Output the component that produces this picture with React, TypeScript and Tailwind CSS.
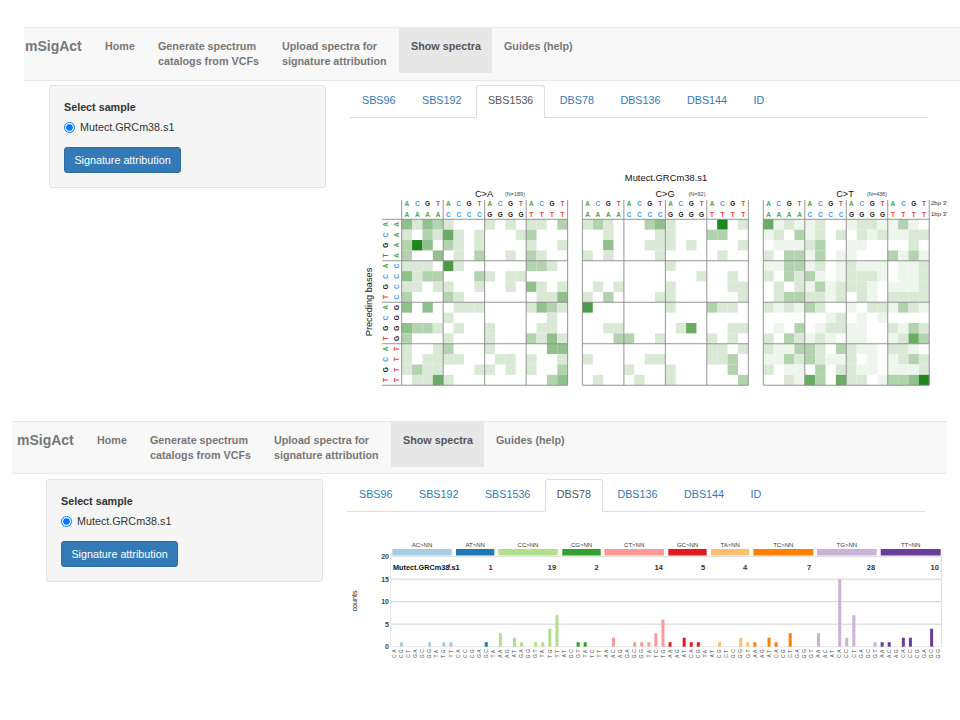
import React from "react";

const FONT = "font-['Liberation_Sans',Arial,sans-serif]";

const navItems = [
  { label: ["Home"], w: "w-[53px]" },
  { label: ["Generate spectrum", "catalogs from VCFs"], w: "w-[124px]" },
  { label: ["Upload spectra for", "signature attribution"], w: "w-[129px]" },
  { label: ["Show spectra"], w: "w-[93px]", active: true },
  { label: ["Guides (help)"], w: "w-[93px]" },
];

const tabs = ["SBS96", "SBS192", "SBS1536", "DBS78", "DBS136", "DBS144", "ID"];

function Navbar({ className, brandClass }: { className: string; brandClass: string }) {
  return (
    <div className={`flex items-start border-y border-[#e7e7e7] bg-[#f8f8f8] ${className}`}>
      <div className={`pt-[9px] text-[14px] leading-[18px] font-bold text-[#777] ${brandClass}`}>mSigAct</div>
      {navItems.map((item) => (
        <div
          key={item.label[0]}
          className={`h-[45px] whitespace-nowrap pt-[11px] pl-[12px] text-[10.75px] leading-[15px] font-bold ${item.w} ${
            item.active ? "bg-[#e7e7e7] text-[#555]" : "text-[#777]"
          }`}
        >
          {item.label.map((l) => (
            <div key={l}>{l}</div>
          ))}
        </div>
      ))}
    </div>
  );
}

function SampleWell({ className }: { className: string }) {
  return (
    <div className={`h-[103px] w-[277px] shrink-0 rounded-[3px] border border-[#e3e3e3] bg-[#f5f5f5] pt-[14px] pl-[14px] ${className}`}>
      <div className="text-[10.75px] leading-[14px] font-bold text-[#333]">Select sample</div>
      <label className="mt-[6px] flex h-[14px] items-center text-[10.75px] text-[#333]">
        <input type="radio" checked readOnly className="m-0 h-[11px] w-[11px] accent-[#0075ff]" />
        <span className="ml-[5px]">Mutect.GRCm38.s1</span>
      </label>
      <div className="mt-[13px] flex h-[26px] w-[117px] items-center justify-center rounded-[3px] border border-[#2e6da4] bg-[#337ab7] text-[10.75px] text-white">
        Signature attribution
      </div>
    </div>
  );
}

function Tabs({ active }: { active: string }) {
  return (
    <div className="flex h-[33px] w-[578px] items-start border-b border-[#ddd]">
      {tabs.map((t) => (
        <div
          key={t}
          className={`mr-[2.5px] flex h-[33px] items-center rounded-t-[3px] border px-[11px] pb-[2px] text-[10.75px] ${
            t === active ? "border-[#ddd] border-b-white bg-white text-[#555]" : "border-transparent text-[#337ab7]"
          }`}
        >
          {t}
        </div>
      ))}
    </div>
  );
}

const GREENS = ["#ffffff", "#eef5ec", "#d9e9d6", "#b3d3af", "#90c08c", "#6aab66", "#4a9a47", "#1f851d"];
const BASES = "ACGT";
const BASE_COLOR: Record<string, string> = { A: "#4aa648", C: "#3f9bf5", G: "#222222", T: "#f53b3b" };

const heatCA = [
  "4243200020202203",
  "2032520200023000",
  "3740320200002002",
  "3004020300203200",
  "2220620000003320",
  "4233000320220000",
  "2202200200204202",
  "3000320000000224",
  "4040022200002432",
  "0000200000000020",
  "4332020020000220",
  "3000200020003242",
  "2002300020000044",
  "2022220002202002",
  "2322000220202003",
  "0225200000000034",
];
const heatCG = [
  "2320003420000702",
  "0020000220003300",
  "0040002220200002",
  "2020000200000200",
  "0000000020000000",
  "0000000000020020",
  "0202000020000022",
  "2030000220000002",
  "6000000020003220",
  "0000000000000000",
  "0022000002500022",
  "0003300200002020",
  "0000000000002202",
  "2000002200002230",
  "0000200020000030",
  "0200020020000003",
];
const heatCT = [
  "5121120012211310",
  "1203120202121122",
  "0111230011000020",
  "2033130110003131",
  "1133120121110112",
  "2032310122210112",
  "0202131222101112",
  "0233221202102222",
  "2121320010221321",
  "0000001201010000",
  "0103012211002132",
  "2032121011001253",
  "2113320321102210",
  "1132321120101232",
  "2011030221101112",
  "0021530522013347",
];

const CELL = 10.37;
const HEAT_TOP = 219.3;

function HeatPanel({ x0, data, first }: { x0: number; data: string[]; first?: boolean }) {
  const bottom = HEAT_TOP + CELL * 16;
  return (
    <g>
      {data.map((row, r) =>
        row.split("").map((v, c) =>
          v === "0" ? null : (
            <rect key={`${r}-${c}`} x={x0 + c * CELL} y={HEAT_TOP + r * CELL} width={CELL} height={CELL} fill={GREENS[Number(v)]} />
          ),
        ),
      )}
      {[0, 4, 8, 12, 16].map((i) => (
        <g key={i}>
          <line x1={first ? 382 : x0} x2={x0 + 16 * CELL} y1={HEAT_TOP + i * CELL} y2={HEAT_TOP + i * CELL} stroke="#8a8a8a" strokeWidth="0.9" />
          <line x1={x0 + i * CELL} x2={x0 + i * CELL} y1={200} y2={bottom} stroke="#8a8a8a" strokeWidth="0.9" />
        </g>
      ))}
      {Array.from({ length: 16 }).map((_, i) => {
        const top = BASES[i % 4];
        const low = BASES[Math.floor(i / 4)];
        const x = x0 + (i + 0.5) * CELL;
        return (
          <g key={i} fontSize="6.5" fontWeight="700" textAnchor="middle">
            <text x={x} y={205.5} fill={BASE_COLOR[top]}>{top}</text>
            <text x={x} y={216.5} fill={BASE_COLOR[low]}>{low}</text>
          </g>
        );
      })}
      {first &&
        Array.from({ length: 16 }).map((_, r) => {
          const a = BASES[r % 4];
          const b = BASES[Math.floor(r / 4)];
          const y = HEAT_TOP + (r + 0.5) * CELL;
          return (
            <g key={r} fontSize="6.5" fontWeight="700" textAnchor="middle">
              <text transform={`translate(388.3 ${y}) rotate(-90)`} fill={BASE_COLOR[a]}>{a}</text>
              <text transform={`translate(398.6 ${y}) rotate(-90)`} fill={BASE_COLOR[b]}>{b}</text>
            </g>
          );
        })}
    </g>
  );
}

function HeatChart() {
  return (
    <svg width="610" height="230" viewBox="350 165 610 230" className={`mt-[47px] block ${FONT}`}>
      <text x="666" y="181" fontSize="9.4" textAnchor="middle" fill="#111">Mutect.GRCm38.s1</text>
      {[
        { t: "C>A", n: "(N=189)", x: 484, nx: 515 },
        { t: "C>G", n: "(N=92)", x: 665, nx: 697 },
        { t: "C>T", n: "(N=438)", x: 845, nx: 877 },
      ].map((h) => (
        <g key={h.t}>
          <text x={h.x} y={197} fontSize="9.2" textAnchor="middle" fill="#111">{h.t}</text>
          <text x={h.nx} y={195.5} fontSize="5.5" textAnchor="middle" fill="#444">{h.n}</text>
        </g>
      ))}
      <HeatPanel x0={401.7} data={heatCA} first />
      <HeatPanel x0={582.4} data={heatCG} />
      <HeatPanel x0={763.3} data={heatCT} />
      <text x="931" y="205" fontSize="6" fill="#333">2bp 3'</text>
      <text x="931" y="216" fontSize="6" fill="#333">1bp 3'</text>
      <text transform="translate(372 302) rotate(-90)" fontSize="9.2" textAnchor="middle" fill="#111">Preceding bases</text>
    </svg>
  );
}

const groups = [
  { name: "AC>NN", color: "#a6cee3", x1: 392.3, x2: 451.7, n: "", nx: 0, labels: ["CA", "CG", "CT", "GA", "GC", "GG", "TA", "TG", "TT"] },
  { name: "AT>NN", color: "#1f78b4", x1: 456, x2: 494.3, n: "1", nx: 490.7, labels: ["CA", "CC", "CG", "GA", "GC", "TA"] },
  { name: "CC>NN", color: "#b2df8a", x1: 498.3, x2: 557.7, n: "19", nx: 552, labels: ["AA", "AG", "AT", "GA", "GG", "GT", "TA", "TG", "TT"] },
  { name: "CG>NN", color: "#33a02c", x1: 562.3, x2: 600.7, n: "2", nx: 596.7, labels: ["AT", "GC", "GT", "TA", "TC", "TT"] },
  { name: "CT>NN", color: "#fb9a99", x1: 604.3, x2: 664, n: "14", nx: 658.7, labels: ["AA", "AC", "AG", "GA", "GC", "GG", "TA", "TC", "TG"] },
  { name: "GC>NN", color: "#e31a1c", x1: 668.3, x2: 706.7, n: "5", nx: 703, labels: ["AA", "AG", "AT", "CA", "CG", "TA"] },
  { name: "TA>NN", color: "#fdbf6f", x1: 711, x2: 749.3, n: "4", nx: 745, labels: ["AT", "CG", "CT", "GC", "GG", "GT"] },
  { name: "TC>NN", color: "#ff7f00", x1: 753.3, x2: 813.3, n: "7", nx: 809, labels: ["AA", "AG", "AT", "CA", "CG", "CT", "GA", "GG", "GT"] },
  { name: "TG>NN", color: "#cab2d6", x1: 817, x2: 876.7, n: "28", nx: 871, labels: ["AA", "AC", "AT", "CA", "CC", "CT", "GA", "GC", "GT"] },
  { name: "TT>NN", color: "#6a3d9a", x1: 880.7, x2: 940.7, n: "10", nx: 934.7, labels: ["AA", "AC", "AG", "CA", "CC", "CG", "GA", "GC", "GG"] },
];

// bar index -> count
const counts: Record<number, number> = {
  1: 1, 5: 1, 7: 1, 8: 1, 13: 1, 15: 3, 17: 2, 18: 1, 20: 1, 21: 1, 22: 4, 23: 7, 26: 1, 27: 1,
  31: 2, 34: 1, 35: 1, 36: 1, 37: 3, 38: 6, 39: 1, 41: 2, 42: 1, 43: 1, 46: 1, 49: 2, 50: 1,
  51: 1, 53: 2, 54: 1, 56: 3, 60: 3, 63: 15, 64: 2, 65: 7, 68: 1, 69: 1, 70: 1, 72: 2, 73: 2, 76: 4,
};

const PLOT_BOTTOM = 646.7;
const UNIT = 4.5;
const barX = (i: number) => 394.3 + 7.07 * i;

function BarChart() {
  let idx = 0;
  return (
    <svg width="601" height="130" viewBox="347 535 601 130" className={`mt-[23px] block ${FONT}`}>
      {[5, 10, 15].map((v) => (
        <line key={v} x1="390.7" x2="941.7" y1={PLOT_BOTTOM - v * UNIT} y2={PLOT_BOTTOM - v * UNIT} stroke="#d2d2d2" strokeWidth="1" />
      ))}
      <path d="M390.7 556.7H941.7V646.7" fill="none" stroke="#dddddd" strokeWidth="1" />
      <path d="M390.7 556.7V646.7H941.7" fill="none" stroke="#e6e6e6" strokeWidth="1" />
      {[0, 5, 10, 15, 20].map((v) => (
        <text key={v} x="389" y={PLOT_BOTTOM - v * UNIT + 2.5} fontSize="7" fontWeight="700" textAnchor="end" fill="#444">{v}</text>
      ))}
      <text transform="translate(357 601) rotate(-90)" fontSize="7.2" textAnchor="middle" fill="#222">counts</text>
      <text x="393" y="570" fontSize="7.3" fontWeight="700" fill="#111">Mutect.GRCm38.s1</text>
      <text x="449" y="568" fontSize="5" fontWeight="700" textAnchor="middle" fill="#333">4</text>
      {groups.map((g) => (
        <g key={g.name}>
          <text x={(g.x1 + g.x2) / 2} y="547" fontSize="6" textAnchor="middle" fill="#333">{g.name}</text>
          <rect x={g.x1} y="549" width={g.x2 - g.x1} height="6.5" fill={g.color} />
          {g.n && (
            <text x={g.nx} y="569.5" fontSize="7.5" fontWeight="700" textAnchor="middle" fill="#333">{g.n}</text>
          )}
          {g.labels.map((l) => {
            const i = idx++;
            const c = counts[i] ?? 0;
            return (
              <g key={l}>
                {c > 0 && <rect x={barX(i) - 1.5} y={PLOT_BOTTOM - c * UNIT} width="3" height={c * UNIT} fill={g.color} />}
                <text transform={`translate(${barX(i) + 1.7} 653) rotate(-90)`} fontSize="5" letterSpacing="1.5" textAnchor="middle" fill="#444">{l}</text>
              </g>
            );
          })}
        </g>
      ))}
    </svg>
  );
}

export default function App() {
  return (
    <div className={`h-[720px] w-[960px] overflow-hidden bg-white pt-[27px] ${FONT}`}>
      <Navbar className="ml-[24px] h-[54px] w-[936px]" brandClass="w-[69px] pl-px" />
      <div className="ml-[24px] mt-[4px] flex h-[336px] items-start">
        <SampleWell className="ml-[25px]" />
        <div className="ml-[24px] w-[610px]">
          <Tabs active="SBS1536" />
          <HeatChart />
        </div>
      </div>
      <Navbar className="ml-[12px] h-[53px] w-[935px]" brandClass="w-[73px] pl-[5px]" />
      <div className="ml-[12px] mt-[5px] flex items-start">
        <SampleWell className="ml-[34px]" />
        <div className="ml-[24px] w-[601px]">
          <Tabs active="DBS78" />
          <BarChart />
        </div>
      </div>
    </div>
  );
}
